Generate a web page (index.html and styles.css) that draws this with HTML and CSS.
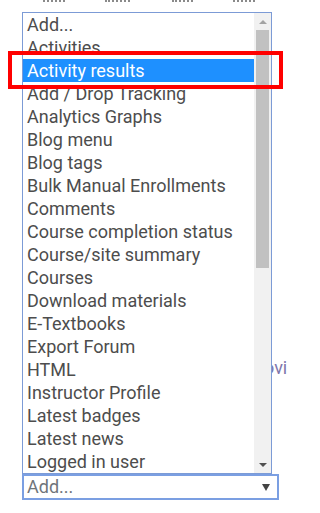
FILE: index.html
```html
<!DOCTYPE html>
<html>
<head>
<meta charset="utf-8">
<link rel="stylesheet" href="styles.css">
</head>
<body>
<div class="page">
  <div class="dots">
    <span class="dot d1"></span>
    <span class="dot d2"></span>
    <span class="dot d3"></span>
    <span class="dot d4"></span>
  </div>
  <span class="behind">ovi</span>
  <div class="listbox">
    <div class="options">
      <div class="opt">Add...</div>
      <div class="opt">Activities</div>
      <div class="opt sel">Activity results</div>
      <div class="opt">Add / Drop Tracking</div>
      <div class="opt">Analytics Graphs</div>
      <div class="opt">Blog menu</div>
      <div class="opt">Blog tags</div>
      <div class="opt">Bulk Manual Enrollments</div>
      <div class="opt">Comments</div>
      <div class="opt">Course completion status</div>
      <div class="opt">Course/site summary</div>
      <div class="opt">Courses</div>
      <div class="opt">Download materials</div>
      <div class="opt">E-Textbooks</div>
      <div class="opt">Export Forum</div>
      <div class="opt">HTML</div>
      <div class="opt">Instructor Profile</div>
      <div class="opt">Latest badges</div>
      <div class="opt">Latest news</div>
      <div class="opt">Logged in user</div>
    </div>
    <div class="scrollbar">
      <div class="arrow"><span class="tri-up"></span></div>
      <div class="track"><div class="thumb"></div></div>
      <div class="arrow"><span class="tri-down"></span></div>
    </div>
  </div>
  <div class="select">
    <span class="placeholder">Add...</span>
    <span class="tri-sel"></span>
  </div>
  <div class="highlight-box"></div>
</div>
</body>
</html>
```

FILE: styles.css
```css
html, body {
  margin: 0;
  padding: 0;
  background: #ffffff;
}

.page {
  position: relative;
  width: 292px;
  height: 513px;
  font-family: Roboto, "Noto Sans", sans-serif;
  overflow: hidden;
}

.dots {
  display: flex;
  height: 2px;
}

.dot {
  display: block;
  height: 0;
  border-bottom: 2px dotted #8a8a8a;
}

.d1 { margin-left: 43px; width: 22px; }
.d2 { margin-left: 40px; width: 25px; }
.d3 { margin-left: 42px; width: 21px; }
.d4 { margin-left: 40px; width: 22px; }

.behind {
  position: absolute;
  left: 264px;
  top: 356px;
  font-size: 18px;
  line-height: 23px;
  color: #7f76ab;
}

.listbox {
  position: relative;
  z-index: 1;
  margin-top: 10px;
  margin-left: 22px;
  width: 248px;
  height: 460px;
  border: 1px solid #7c9bd6;
  background: #ffffff;
  display: flex;
}

.options {
  flex: 1;
  overflow: hidden;
}

.opt {
  height: 23px;
  line-height: 23px;
  padding-left: 4px;
  font-size: 18px;
  color: #4d4d4d;
  white-space: nowrap;
}

.opt.sel {
  background: #1e90ff;
  color: #ffffff;
}

.scrollbar {
  width: 17px;
  background: #f1f1f1;
  display: flex;
  flex-direction: column;
}

.arrow {
  height: 17px;
  display: flex;
  align-items: center;
  justify-content: center;
}

.track {
  flex: 1;
  padding: 0 2px;
}

.thumb {
  height: 238px;
  background: #c1c1c1;
}

.tri-up {
  width: 0;
  height: 0;
  border-left: 4px solid transparent;
  border-right: 4px solid transparent;
  border-bottom: 4px solid #a3a3a3;
}

.tri-down {
  width: 0;
  height: 0;
  border-left: 4px solid transparent;
  border-right: 4px solid transparent;
  border-top: 4px solid #505050;
}

.select {
  margin-left: 22px;
  width: 243px;
  height: 22px;
  border: 2px solid #7b9fe2;
  display: flex;
  align-items: center;
  justify-content: space-between;
  padding: 0 7px 0 3px;
  box-sizing: content-box;
  background: #ffffff;
}

.placeholder {
  font-size: 18px;
  color: #70757a;
  line-height: 22px;
}

.tri-sel {
  width: 0;
  height: 0;
  border-left: 4px solid transparent;
  border-right: 4px solid transparent;
  border-top: 7px solid #444444;
}

.highlight-box {
  position: absolute;
  z-index: 2;
  left: 8px;
  top: 51px;
  width: 267px;
  height: 30px;
  border: 4px solid #ff0000;
}
```
